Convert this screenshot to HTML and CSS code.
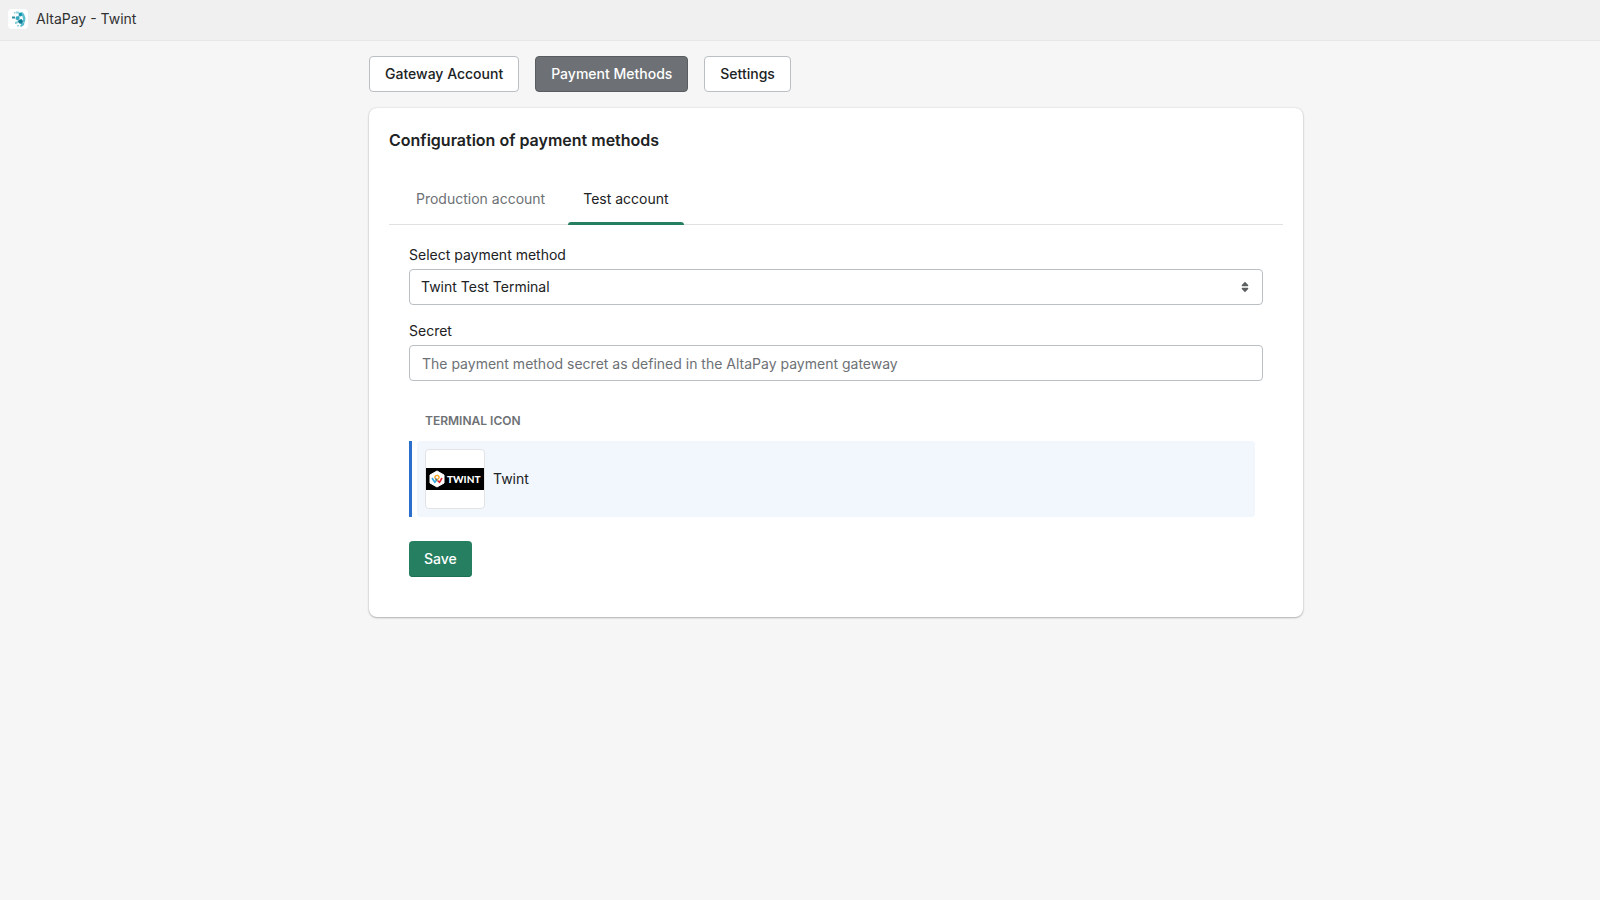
FILE: index.html
```html
<!DOCTYPE html>
<html lang="en">
<head>
<meta charset="utf-8">
<meta name="viewport" content="width=device-width, initial-scale=1">
<title>AltaPay - Twint</title>
<link rel="stylesheet" href="styles.css">
</head>
<body>
<header class="topbar">
  <svg class="app-icon" viewBox="0 0 20 20" aria-hidden="true">
    <rect width="20" height="20" rx="4" fill="#fff"/>
    <path d="M8 2.500h3v2H8zM6 3h1.500v1.500H6z" fill="#8fd0da"/>
    <path d="M10 4l4-1 2 2 1.500 4-.5 4-2.500 1 .5-4-1-4-2-1z" fill="#5fc0cf"/>
    <path d="M11 4h2.500l1 2.500-2 1-2-1z" fill="#1796ad"/>
    <path d="M8 7.500l3.500-.5v3l-2 1.500-2-1.500z" fill="#35a9be"/>
    <path d="M10.500 11l3-1 1.500 2-1 3-2.500-.500-1.500-1.500z" fill="#0c7f96"/>
    <path d="M14 14l2.500-.5-.5 2.500-3 2-1-1z" fill="#55b9c8"/>
    <path d="M7 13l3-1-.5 2.500-2.500.5z" fill="#7ecbd6"/>
    <path d="M4 7.500h3v2H4z" fill="#2f8c9e"/>
    <path d="M9 16h2v1.500H9z" fill="#9bd6df"/>
  </svg>
  <span>AltaPay - Twint</span>
</header>
<main class="page">
  <nav class="actions" aria-label="Sections">
    <button type="button" class="btn">Gateway Account</button>
    <button type="button" class="btn btn-pressed" aria-pressed="true">Payment Methods</button>
    <button type="button" class="btn">Settings</button>
  </nav>
  <section class="card">
    <h2 class="card-title">Configuration of payment methods</h2>
    <div class="tabs" role="tablist">
      <button type="button" class="tab" role="tab" aria-selected="false">Production account</button>
      <button type="button" class="tab tab-active" role="tab" aria-selected="true">Test account</button>
    </div>
    <form class="form">
      <div class="field">
        <label for="method">Select payment method</label>
        <div class="select-wrap">
          <select id="method" class="control"><option>Twint Test Terminal</option></select>
          <svg class="select-icon" viewBox="0 0 20 20" aria-hidden="true"><path d="M6.800 8L10 4.800 13.200 8q.5 1.300-.7 1.300h-5Q6.300 9.300 6.800 8zM6.800 12L10 15.200 13.200 12q.5-1.300-.7-1.300h-5Q6.300 10.700 6.800 12z" fill="#5c5f62"/></svg>
        </div>
      </div>
      <div class="field">
        <label for="secret">Secret</label>
        <input id="secret" class="control" type="text" placeholder="The payment method secret as defined in the AltaPay payment gateway">
      </div>
      <h3 class="subheading">Terminal icon</h3>
      <div class="option">
        <div class="option-body">
          <span class="thumb">
            <svg viewBox="0 0 58 22" aria-hidden="true">
              <rect width="58" height="22" fill="#000"/>
              <path d="M11 3l7 4v8l-7 4-7-4V7z" fill="#fff" stroke="#fff" stroke-linejoin="round"/>
              <path d="M6 10l2.800 4.200 1.700-2" fill="none" stroke="#2aa8df" stroke-width="1.600"/>
              <path d="M11.500 12.500l2 1.800L16 10" fill="none" stroke="#e3262e" stroke-width="1.600"/>
              <path d="M8.800 9.500Q9 7.300 11 7.300t2.200 2.200L11 12.200z" fill="none" stroke="#f5a51b" stroke-width="1.300"/>
              <path d="M9.500 10.500l1.500 2" fill="none" stroke="#1e60b5" stroke-width="1.200"/>
              <text class="wordmark" x="21" y="15">TWINT</text>
            </svg>
          </span>
          <span>Twint</span>
        </div>
      </div>
      <button type="button" class="btn btn-primary">Save</button>
    </form>
  </section>
</main>
</body>
</html>
```
FILE: styles.css
```css
* { box-sizing: border-box; }
body {
  margin: 0;
  background: #f6f6f6;
  color: #202223;
  font: 400 14px/20px Inter, "Liberation Sans", sans-serif;
}
button, input, select { font: inherit; color: inherit; }
h2, h3 { margin: 0; }
.topbar {
  display: flex;
  align-items: center;
  gap: 8px;
  min-height: 41px;
  padding: 0 8px 2px;
  background: #f0f0f0;
  border-bottom: 1px solid #e7e7e7;
  color: #303030;
}
.app-icon { width: 20px; height: 20px; }
.page {
  max-width: 1006px;
  margin: 0 auto;
  padding: 15px 0 32px 72px;
}
.actions { display: flex; gap: 16px; }
.btn {
  min-height: 36px;
  padding: 7px 15px;
  border: 1px solid #babfc3;
  border-radius: 4px;
  background: #fff;
  font-weight: 500;
}
.btn-pressed { background: #6d7175; border-color: #5a5d60; color: #fff; }
.btn-primary { align-self: flex-start; margin-top: 24px; padding: 8px 15px; border: 0; background: #267f60; color: #fff; box-shadow: inset 0 -1px 0 #1b7354; }
.card {
  margin-top: 16px;
  padding: 20px 20px 40px;
  border-radius: 8px;
  background: #fff;
  box-shadow: 0 0 2px rgba(23, 24, 24, .15), 0 1px 2px rgba(0, 0, 0, .25);
}
.card-title { font-size: 16px; line-height: 24px; font-weight: 600; }
.tabs {
  display: flex;
  gap: 8px;
  margin-top: 20px;
  padding-left: 12px;
  border-bottom: 1px solid #dfe1e3;
}
.tab {
  position: relative;
  padding: 17px 15px 15px;
  border: 0;
  background: none;
  color: #6d7175;
}
.tab-active { color: #202223; }
.tab-active::after {
  content: "";
  position: absolute;
  inset: auto 0 -1px;
  height: 3px;
  border-radius: 3px 3px 0 0;
  background: #267f60;
}
.form { display: flex; flex-direction: column; padding: 20px 20px 0; }
.field { display: flex; flex-direction: column; gap: 4px; }
.field + .field { margin-top: 16px; }
.select-wrap { display: grid; align-items: center; }
.select-wrap > * { grid-area: 1 / 1; }
.control {
  width: 100%;
  height: 36px;
  padding: 0 12px;
  border: 1px solid #babfc3;
  border-radius: 4px;
  background: #fff;
}
select.control { appearance: none; padding: 0 11px; }
.control::placeholder { color: #6d7175; opacity: 1; }
.select-icon { justify-self: end; width: 20px; height: 20px; margin-right: 8px; pointer-events: none; }
.subheading {
  padding: 0 16px;
  margin: 32px 0 12px;
  font-size: 12px;
  line-height: 16px;
  font-weight: 600;
  text-transform: uppercase;
  color: #6d7175;
}
.option { border-left: 3px solid #2c6ecb; padding: 0 8px 0 5px; }
.option-body {
  display: flex;
  align-items: center;
  gap: 8px;
  padding: 8px;
  border-radius: 3px;
  background: #f2f7fe;
}
.thumb {
  display: flex;
  align-items: center;
  width: 60px;
  height: 60px;
  border: 1px solid #e1e3e5;
  border-radius: 4px;
  background: #fff;
}
.thumb svg { width: 100%; }
.wordmark { font: 900 10px Lato, sans-serif; fill: #fff; }
```
